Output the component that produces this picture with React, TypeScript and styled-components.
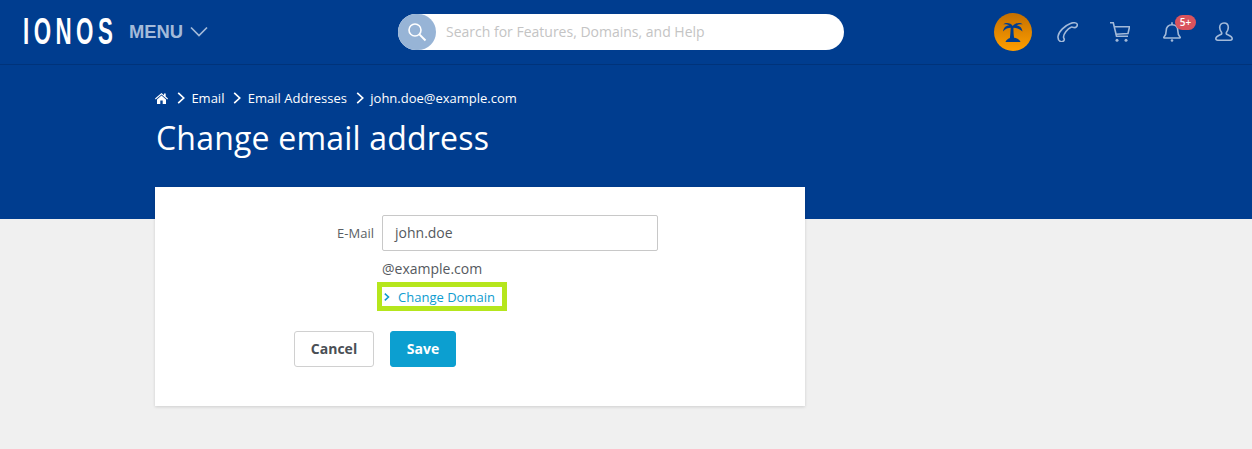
import React from "react";
import styled, { createGlobalStyle } from "styled-components";

const Global = createGlobalStyle`
  html, body { margin: 0; padding: 0; background: #f0f0f0; }
  body { font-family: "Open Sans", "Liberation Sans", sans-serif; color: #4a4f55; }
  * { box-sizing: border-box; }
`;

const Page = styled.div`
  height: 449px;
  overflow: hidden;
  background: #f0f0f0;
`;

const Hero = styled.div`
  background: #003d8f;
  height: 219px;
`;

const TopBar = styled.header`
  height: 65px;
  display: flex;
  align-items: center;
  padding: 0 0 1px 0;
  border-bottom: 1px solid #00337a;
`;

const LeftZone = styled.div`
  width: 398px;
  display: flex;
  align-items: center;
  padding-left: 23px;
`;

const Logo = styled.div`
  width: 90px;
  height: 30px;
  color: #fff;
  font-family: "Liberation Sans", sans-serif;
  font-weight: 700;
  font-size: 36px;
  line-height: 30px;
  letter-spacing: 7.2px;
  white-space: nowrap;
  transform: scaleX(0.62);
  transform-origin: left center;
`;

const MenuButton = styled.div`
  margin-left: 16px;
  display: flex;
  align-items: center;
  gap: 7px;
  color: #a3bad9;
  font-family: "Liberation Sans", sans-serif;
  font-weight: 700;
  font-size: 18.4px;
  line-height: 24px;
`;

const SearchBox = styled.div`
  width: 446px;
  height: 36px;
  border-radius: 18px;
  background: #fff;
  display: flex;
  align-items: center;
`;

const SearchBadge = styled.div`
  width: 38px;
  height: 36px;
  border-radius: 18px;
  background: #97b4d6;
  display: flex;
  align-items: center;
  justify-content: center;
`;

const SearchHint = styled.span`
  margin-left: 10px;
  font-size: 14px;
  color: #c4c4c4;
`;

const IconZone = styled.div`
  margin-left: auto;
  display: flex;
  align-items: center;
  padding-right: 19px;
`;

const Avatar = styled.div`
  width: 38px;
  height: 38px;
  border-radius: 50%;
  background: linear-gradient(180deg, #c46f00 0%, #ff9f00 100%);
  display: flex;
  align-items: center;
  justify-content: center;
  margin-right: 25px;
`;

const IconSlot = styled.div<{ $gap: number }>`
  position: relative;
  display: flex;
  margin-right: ${(p) => p.$gap}px;
`;

const Badge = styled.span`
  position: absolute;
  left: 12px;
  top: -7px;
  width: 21px;
  height: 15px;
  border-radius: 8px;
  background: #d9535d;
  color: #fff;
  font-size: 10px;
  line-height: 15px;
  font-weight: 600;
  text-align: center;
`;

const HeroBody = styled.div`
  padding: 23px 0 0 155px;
`;

const Crumbs = styled.nav`
  display: flex;
  align-items: center;
  height: 20px;
  color: #fff;
  font-size: 13px;
`;

const CrumbSep = styled.span`
  display: flex;
  margin: 0 6px 0 9px;
`;

const Title = styled.h1`
  margin: 10px 0 0 1px;
  color: #fff;
  font-weight: 400;
  font-size: 32px;
  line-height: 40px;
  letter-spacing: 0.2px;
`;

const Card = styled.section`
  width: 650px;
  height: 219px;
  margin: -32px 0 0 155px;
  background: #fff;
  box-shadow: 0 1px 3px rgba(0, 0, 0, 0.14);
  padding-top: 28px;
`;

const Form = styled.div`
  display: grid;
  grid-template-columns: 219px 276px;
  column-gap: 8px;
`;

const FieldLabel = styled.label`
  font-size: 13px;
  line-height: 36px;
  text-align: right;
  color: #5a5f65;
`;

const TextField = styled.div`
  height: 36px;
  border: 1px solid #c8c8c8;
  border-radius: 2px;
  background: #fff;
  padding-left: 12px;
  font-size: 14px;
  line-height: 34px;
  color: #55595e;
`;

const Domain = styled.div`
  grid-column: 2;
  margin-top: 8px;
  font-size: 14px;
  line-height: 20px;
  color: #55595e;
`;

const LinkBox = styled.a`
  grid-column: 2;
  justify-self: start;
  width: 130px;
  height: 29px;
  margin: 3px 0 0 -5px;
  border: 5px solid #b5e61d;
  display: flex;
  align-items: center;
  padding-left: 2px;
  gap: 8.500px;
  color: #0d9ccf;
  font-size: 13px;
`;

const ButtonLeft = styled.div`
  margin-top: 20px;
  display: flex;
  justify-content: flex-end;
`;

const ButtonRight = styled.div`
  margin-top: 20px;
  padding-left: 8px;
`;

const Button = styled.button<{ $primary?: boolean }>`
  width: ${(p) => (p.$primary ? 66 : 80)}px;
  height: 36px;
  padding: 0 0 2px;
  border-radius: 3px;
  border: 1px solid ${(p) => (p.$primary ? "#0c9fd0" : "#d0d0d0")};
  background: ${(p) => (p.$primary ? "#0c9fd0" : "#fff")};
  color: ${(p) => (p.$primary ? "#fff" : "#4a4f55")};
  font-family: "Open Sans", sans-serif;
  font-weight: 700;
  font-size: 14px;
`;

const Chevron = ({ s = 12, c = "#fff", w = 1.4 }: { s?: number; c?: string; w?: number }) => (
  <svg width={s * 0.7} height={s} viewBox="0 0 7 10" fill="none">
    <path d="M1 .8 5.600 5 1 9.200" stroke={c} strokeWidth={w} />
  </svg>
);

const ic = "#a3bad9";

export default function App() {
  return (
    <Page>
      <Global />
      <Hero>
        <TopBar>
          <LeftZone>
            <Logo>IONOS</Logo>
            <MenuButton>
              MENU
              <svg width="18" height="11" viewBox="0 0 18 11" fill="none">
                <path d="M1 1.500 9 9.500 17 1.500" stroke={ic} strokeWidth="1.7" />
              </svg>
            </MenuButton>
          </LeftZone>
          <SearchBox>
            <SearchBadge>
              <svg width="20" height="20" viewBox="0 0 20 20" fill="none" stroke="#fff" strokeWidth="1.6">
                <circle cx="8" cy="8" r="6" />
                <path d="M12.400 12.400 18.500 18.500" strokeWidth="2" />
              </svg>
            </SearchBadge>
            <SearchHint>Search for Features, Domains, and Help</SearchHint>
          </SearchBox>
          <IconZone>
            <Avatar>
              <svg width="20" height="20" viewBox="0 0 20 20" fill="#003d8f">
                <path d="M9.800 4C8 .8 3 0 .3 2.200c2.500-.2 4.700.2 6 1.300C3 3.300.6 5.500 0 9.500c2.500-2.800 5-3.800 7.700-3.800C7.500 9 7.400 12.500 6.800 16.500h4.400C10.600 12.500 10.300 9 10.500 5.700c2.700 0 6 1 9 3.800-.5-4-3.200-6.200-6.300-6 1.500-1.100 4-1.500 6.500-1.300C17 0 11.800.8 9.800 4Z" />
                <path d="M2.500 20c.8-2.700 4-4.200 7.500-4.200s6.700 1.500 7.500 4.200h-15Z" />
              </svg>
            </Avatar>
            <IconSlot $gap={32}>
              <svg width="21" height="20" viewBox="0 0 21 20" fill="none" stroke={ic} strokeWidth="1.6">
                <path d="M13.500 1.500C16 .3 20 .5 20.300 2.500 20.500 4.500 18.800 6 17 5.500c-1-.3-2-.7-3-.3C10.500 6.500 6.500 12 6.500 15c0 1 .8 1.700.8 2.500 0 1.500-1.800 2.500-3.500 2.100C1.800 19 .8 17 1 14.500 1.500 9.500 8 3.500 13.500 1.500Z" />
              </svg>
            </IconSlot>
            <IconSlot $gap={33}>
              <svg width="20" height="20" viewBox="0 0 20 20" fill="none" stroke={ic} strokeWidth="1.6">
                <path d="M0 .8h3.300l3.200 13.400H18" />
                <path d="M4.300 4.800H19.500L18 11.500 5.800 12.300" />
                <circle cx="7" cy="18.300" r="1.500" fill={ic} stroke="none" />
                <circle cx="16" cy="18.300" r="1.500" fill={ic} stroke="none" />
              </svg>
            </IconSlot>
            <IconSlot $gap={34}>
              <svg width="18" height="20" viewBox="0 0 18 20" fill="none" stroke={ic} strokeWidth="1.6">
                <path d="M1 15c1.800-1.800 2.200-3 2.200-6.300C3.200 5 5.500 2.800 9 2.800s5.800 2.200 5.800 5.900c0 3.300.4 4.500 2.200 6.300.5.800 0 1-1 1H2c-1 0-1.500-.2-1-1Z" />
                <path d="M9 .2v2.600" />
                <circle cx="9" cy="18.500" r="1.300" fill={ic} stroke="none" />
              </svg>
              <Badge>5+</Badge>
            </IconSlot>
            <IconSlot $gap={0}>
              <svg width="18" height="20" viewBox="0 0 18 20" fill="none" stroke={ic} strokeWidth="1.6">
                <path d="M9 1c2.800 0 4.300 2 4.300 4.500 0 2.100-1 3.800-1.900 5-.5 1 0 1.600 1 2.100 2.300 1 4.800 1.700 4.800 4 0 1-.8 1.600-1.900 1.600H2.700C1.600 18.200.8 17.600.8 16.600c0-2.300 2.500-3 4.800-4 1-.5 1.500-1.100 1-2.100-.9-1.200-1.900-2.900-1.900-5C4.700 3 6.200 1 9 1Z" />
              </svg>
            </IconSlot>
          </IconZone>
        </TopBar>
        <HeroBody>
          <Crumbs>
            <svg width="13" height="11" viewBox="0 0 13 11" fill="#fff">
              <path d="M6.500 0 0 5.600l.7.800L6.500 1.500l5.800 4.900.7-.8-2.300-2V.6H9v1.600L6.500 0Z" />
              <path d="M6.500 2.600 2 6.400V11h3.300V7.600h2.400V11H11V6.400L6.500 2.600Z" />
            </svg>
            <CrumbSep><Chevron /></CrumbSep>
            <span>Email</span>
            <CrumbSep><Chevron /></CrumbSep>
            <span>Email Addresses</span>
            <CrumbSep><Chevron /></CrumbSep>
            <span>john.doe@example.com</span>
          </Crumbs>
          <Title>Change email address</Title>
        </HeroBody>
      </Hero>
      <Card>
        <Form>
          <FieldLabel>E-Mail</FieldLabel>
          <TextField>john.doe</TextField>
          <Domain>@example.com</Domain>
          <LinkBox>
            <Chevron s={8} c="#0d9ccf" w={2} />
            Change Domain
          </LinkBox>
          <ButtonLeft><Button>Cancel</Button></ButtonLeft>
          <ButtonRight><Button $primary>Save</Button></ButtonRight>
        </Form>
      </Card>
    </Page>
  );
}
